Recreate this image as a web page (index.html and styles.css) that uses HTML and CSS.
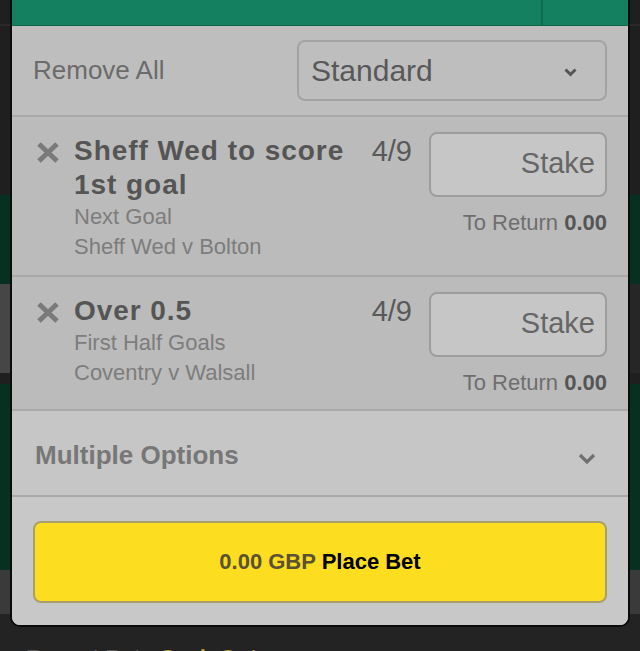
FILE: index.html
```html
<!DOCTYPE html>
<html lang="en">
<head>
  <meta charset="UTF-8" />
  <meta name="viewport" content="width=device-width, initial-scale=1.0" />
  <title>Bet Slip</title>
  <link rel="stylesheet" href="styles.css">
</head>
<body>
  <!-- page behind the overlay -->
  <div class="page">
    <div class="band band-top"></div>
    <div class="band band-green"></div>
    <div class="band band-grey"></div>
    <div class="band band-gap"></div>
    <div class="band band-green band-tall"></div>
    <div class="band band-grey band-low"></div>
    <div class="page-foot"><span>Recent Bets</span> <span class="gold">Cash Out</span></div>
  </div>

  <div class="betslip">
    <div class="slip-head"><span class="slip-close"></span></div>

    <div class="slip-toolbar">
      <span class="remove-all">Remove All</span>
      <div class="select">
        <span>Standard</span>
        <svg class="chev-small" width="13" height="9" viewBox="0 0 13 9"><path d="M1.5 1.5 L6.5 6.5 L11.5 1.5" fill="none" stroke="#555" stroke-width="3"/></svg>
      </div>
    </div>

    <div class="bet">
      <svg class="bet-remove" width="22" height="21" viewBox="0 0 22 21"><path d="M2 2 L20 19 M20 2 L2 19" stroke="#7a7a7a" stroke-width="5"/></svg>
      <div class="bet-info">
        <div class="bet-title">Sheff Wed to score 1st goal</div>
        <div class="bet-sub">Next Goal</div>
        <div class="bet-sub">Sheff Wed v Bolton</div>
      </div>
      <div class="bet-odds">4/9</div>
      <div class="bet-stake">
        <div class="stake-input">Stake</div>
        <div class="to-return">To Return <b>0.00</b></div>
      </div>
    </div>

    <div class="bet">
      <svg class="bet-remove" width="22" height="21" viewBox="0 0 22 21"><path d="M2 2 L20 19 M20 2 L2 19" stroke="#7a7a7a" stroke-width="5"/></svg>
      <div class="bet-info">
        <div class="bet-title">Over 0.5</div>
        <div class="bet-sub">First Half Goals</div>
        <div class="bet-sub">Coventry v Walsall</div>
      </div>
      <div class="bet-odds">4/9</div>
      <div class="bet-stake">
        <div class="stake-input">Stake</div>
        <div class="to-return">To Return <b>0.00</b></div>
      </div>
    </div>

    <div class="multiples">
      <span>Multiple Options</span>
      <svg width="18" height="11" viewBox="0 0 18 11"><path d="M2 2 L9 9 L16 2" fill="none" stroke="#707070" stroke-width="3.2"/></svg>
    </div>

    <div class="place-area">
      <button class="place-bet"><span class="total">0.00 GBP</span> Place Bet</button>
    </div>
  </div>
</body>
</html>
```

FILE: styles.css
```css
body {
  margin: 0;
  height: 651px;
  overflow: hidden;
  background: #232323;
  font-family: "Liberation Sans", Arial, sans-serif;
  position: relative;
}
.band {
  width: 100%;
}
.band-top {
  height: 195px;
  background: linear-gradient(#1f1f1f 24px, #2a2a2a 24px, #2a2a2a 26px, #1f1f1f 26px);
}
.band-green {
  height: 89px;
  background: #06301f;
}
.band-tall {
  height: 186px;
}
.band-grey {
  height: 89px;
  background: linear-gradient(90deg, #464646 50%, #262626 50%);
}
.band-low {
  height: 44px;
  background: #3a3a3a;
}
.band-gap {
  height: 11px;
  background: #1f1f1f;
}
.page-foot {
  padding: 31px 0 0 26px;
  font-size: 22px;
  font-weight: bold;
  color: #555;
}
.gold {
  color: #b89a2a;
}

/* bet slip overlay */
.betslip {
  position: absolute;
  left: 10px;
  top: 0;
  width: 616px;
  border: 2px solid #0b0b0b;
  border-top: 0;
  border-radius: 0 0 10px 10px;
  overflow: hidden;
  background: #c8c8c8;
}
.slip-head {
  height: 25px;
  background: #15805f;
  border-bottom: 1px solid #0e6549;
  display: flex;
  justify-content: flex-end;
}
.slip-close {
  width: 85px;
  border-left: 2px solid #0f6b4e;
}
.slip-toolbar {
  display: flex;
  align-items: center;
  justify-content: space-between;
  padding: 14px 21px;
  background: #bebebe;
  border-bottom: 2px solid #a9a9a9;
}
.remove-all {
  font-size: 26px;
  color: #6b6b6b;
}
.select {
  width: 310px;
  height: 61px;
  box-sizing: border-box;
  border: 2px solid #a3a3a3;
  border-radius: 8px;
  display: flex;
  align-items: center;
  justify-content: space-between;
  padding: 0 28px 0 12px;
  font-size: 30px;
  color: #585858;
}
.chev-small {
  margin-top: 3px;
}
.bet {
  display: flex;
  align-items: flex-start;
  padding: 15px 21px 13px 25px;
  background: #bbbbbb;
  border-bottom: 2px solid #a9a9a9;
}
.bet-remove {
  flex: none;
  margin: 10px 15px 0 0;
}
.bet-info {
  flex: 1;
  padding-top: 2px;
}
.bet-title {
  font-size: 28px;
  letter-spacing: 0.95px;
  line-height: 34px;
  font-weight: bold;
  color: #555;
}
.bet-sub {
  font-size: 22px;
  line-height: 30px;
  color: #7d7d7d;
}
.bet-odds {
  padding-top: 2px;
  margin: 0 17px 0 10px;
  font-size: 29px;
  line-height: 34px;
  color: #595959;
}
.bet-stake {
  width: 178px;
  flex: none;
}
.stake-input {
  height: 65px;
  box-sizing: border-box;
  border: 2px solid #9d9d9d;
  border-radius: 8px;
  background: #c6c6c6;
  text-align: right;
  padding-right: 10px;
  font-size: 29px;
  line-height: 58px;
  color: #666;
}
.to-return {
  margin-top: 13px;
  text-align: right;
  font-size: 22px;
  line-height: 26px;
  color: #6e6e6e;
}
.to-return b {
  color: #555;
}
.multiples {
  display: flex;
  align-items: center;
  justify-content: space-between;
  padding: 29px 32px 25px 23px;
  background: #c6c6c6;
  border-bottom: 2px solid #a9a9a9;
  font-size: 26px;
  line-height: 30px;
  font-weight: bold;
  color: #777;
}
.multiples svg {
  margin-top: 6px;
}
.place-area {
  padding: 24px 21px 22px 21px;
  background: #c8c8c8;
}
.place-bet {
  display: block;
  width: 100%;
  height: 82px;
  border: 2px solid #a89f6c;
  border-radius: 8px;
  background: #fddd1f;
  font-family: "Liberation Sans", Arial, sans-serif;
  font-size: 22px;
  font-weight: bold;
  color: #000;
}
.total {
  color: #5b5233;
}
```
